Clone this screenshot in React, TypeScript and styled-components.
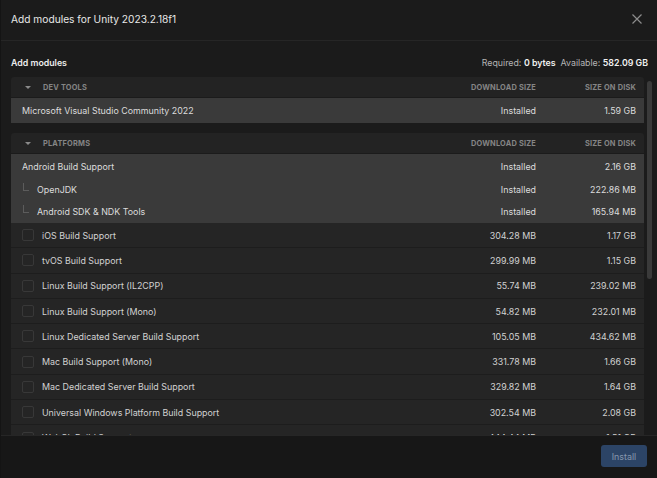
import React from "react";
import styled, { createGlobalStyle } from "styled-components";

const GlobalStyle = createGlobalStyle`
  html, body { margin: 0; padding: 0; background: #1b1b1b; }
  body { font-family: Inter, "Noto Sans", sans-serif; -webkit-font-smoothing: antialiased; }
  * { box-sizing: border-box; }
`;

const Dialog = styled.div`
  width: 657px;
  height: 478px;
  display: flex;
  flex-direction: column;
  background: #1b1b1b;
  color: #dedede;
  overflow: hidden;
  border-left: 1px solid #141414;
`;

const Header = styled.div`
  height: 41px;
  flex: none;
  display: flex;
  align-items: center;
  justify-content: space-between;
  padding: 0 14px 2px 10px;
  border-bottom: 1px solid #262626;
`;

const Title = styled.div`
  font-size: 10.2px;
  color: #e8e8e8;
`;

const CloseButton = styled.button`
  background: none;
  border: none;
  padding: 0;
  width: 12px;
  height: 12px;
  display: flex;
  color: #8c8c8c;
`;

const Body = styled.div`
  flex: 1;
  min-height: 0;
  display: flex;
  flex-direction: column;
`;

const SubHeader = styled.div`
  display: flex;
  align-items: center;
  justify-content: space-between;
  height: 14px;
  margin: 14px 9px 8px 10px;
  font-size: 8.8px;
`;

const SubTitle = styled.div`
  font-weight: 600;
  color: #ececec;
`;

const Space = styled.div`
  color: #b4b4b4;
  b { color: #f0f0f0; font-weight: 600; }
`;

const ScrollArea = styled.div`
  flex: 1;
  min-height: 0;
  display: flex;
  padding-left: 10px;
`;

const List = styled.div`
  width: 633px;
  display: flex;
  flex-direction: column;
  gap: 10px;
  overflow: hidden;
`;

const Scrollbar = styled.div`
  margin: 4px 0 0 3px;
  width: 5px;
  height: 198px;
  border-radius: 3px;
  background: #3a3a3a;
`;

const Section = styled.div`
  display: flex;
  flex-direction: column;
  border-radius: 3px 3px 0 0;
  overflow: hidden;
  flex: none;
`;

const SectionHeader = styled.div`
  height: 21px;
  display: grid;
  grid-template-columns: 1fr 100px 100px;
  align-items: center;
  padding-right: 8px;
  background: #232323;
  border-bottom: 1px solid #1b1b1b;
  font-size: 7.4px;
  font-weight: 700;
  letter-spacing: 0.2px;
  color: #858585;
  text-transform: uppercase;
`;

const SectionTitle = styled.div`
  display: flex;
  align-items: center;
  gap: 12px;
  padding-left: 14px;
`;

const Caret = styled.span`
  width: 0;
  height: 0;
  border-left: 3px solid transparent;
  border-right: 3px solid transparent;
  border-top: 3px solid #8a8a8a;
`;

const Right = styled.div`
  text-align: right;
`;

const Row = styled.div<{ $installed?: boolean; $h?: number }>`
  height: ${(p) => p.$h ?? 25.3}px;
  flex: none;
  display: grid;
  grid-template-columns: 1fr 100px 100px;
  align-items: center;
  padding-right: 8px;
  font-size: 8.9px;
  color: ${(p) => (p.$installed ? "#dcdcdc" : "#d2d2d2")};
  background: ${(p) => (p.$installed ? "#3a3a3a" : "#252525")};
  border-bottom: 1px solid ${(p) => (p.$installed ? "#3a3a3a" : "#1d1d1d")};
`;

const Name = styled.div<{ $indent?: number }>`
  display: flex;
  align-items: center;
  padding-left: ${(p) => p.$indent ?? 11}px;
  gap: 8px;
`;

const Checkbox = styled.span`
  width: 12px;
  height: 12px;
  border: 1px solid #383838;
  border-radius: 2px;
  flex: none;
`;

const TreeLine = styled.span`
  width: 6px;
  height: 8px;
  margin-top: -6px;
  border-left: 1px solid #5c5c5c;
  border-bottom: 1px solid #5c5c5c;
  flex: none;
`;

const Footer = styled.div`
  height: 43px;
  flex: none;
  display: flex;
  align-items: center;
  justify-content: flex-end;
  padding: 0 10px 2px 0;
  border-top: 1px solid #262626;
  background: #171717;
`;

const InstallButton = styled.button`
  width: 46px;
  height: 22px;
  border: none;
  border-radius: 3px;
  background: #2c4466;
  color: #8797ad;
  font-family: inherit;
  font-size: 8.9px;
  padding: 0;
`;

type Mod = { name: string; dl: string; disk: string };

const platforms: Mod[] = [
  { name: "iOS Build Support", dl: "304.28 MB", disk: "1.17 GB" },
  { name: "tvOS Build Support", dl: "299.99 MB", disk: "1.15 GB" },
  { name: "Linux Build Support (IL2CPP)", dl: "55.74 MB", disk: "239.02 MB" },
  { name: "Linux Build Support (Mono)", dl: "54.82 MB", disk: "232.01 MB" },
  { name: "Linux Dedicated Server Build Support", dl: "105.05 MB", disk: "434.62 MB" },
  { name: "Mac Build Support (Mono)", dl: "331.78 MB", disk: "1.66 GB" },
  { name: "Mac Dedicated Server Build Support", dl: "329.82 MB", disk: "1.64 GB" },
  { name: "Universal Windows Platform Build Support", dl: "302.54 MB", disk: "2.08 GB" },
  { name: "WebGL Build Support", dl: "444.44 MB", disk: "1.51 GB" },
];

export default function App() {
  return (
    <>
      <GlobalStyle />
      <Dialog>
        <Header>
          <Title>Add modules for Unity 2023.2.18f1</Title>
          <CloseButton aria-label="Close">
            <svg width="12" height="12" viewBox="0 0 12 12">
              <path d="M1.5 1.5 L10.5 10.5 M10.5 1.5 L1.5 10.5" stroke="currentColor" strokeWidth="1.2" />
            </svg>
          </CloseButton>
        </Header>
        <Body>
          <SubHeader>
            <SubTitle>Add modules</SubTitle>
            <Space>
              Required: <b>0 bytes</b>&nbsp; Available: <b>582.09 GB</b>
            </Space>
          </SubHeader>
          <ScrollArea>
            <List>
              <Section>
                <SectionHeader>
                  <SectionTitle>
                    <Caret />
                    Dev tools
                  </SectionTitle>
                  <Right>Download size</Right>
                  <Right>Size on disk</Right>
                </SectionHeader>
                <Row $installed $h={25}>
                  <Name>Microsoft Visual Studio Community 2022</Name>
                  <Right>Installed</Right>
                  <Right>1.59 GB</Right>
                </Row>
              </Section>
              <Section>
                <SectionHeader>
                  <SectionTitle>
                    <Caret />
                    Platforms
                  </SectionTitle>
                  <Right>Download size</Right>
                  <Right>Size on disk</Right>
                </SectionHeader>
                <Row $installed $h={25}>
                  <Name>Android Build Support</Name>
                  <Right>Installed</Right>
                  <Right>2.16 GB</Right>
                </Row>
                <Row $installed $h={22}>
                  <Name $indent={12}>
                    <TreeLine />
                    OpenJDK
                  </Name>
                  <Right>Installed</Right>
                  <Right>222.86 MB</Right>
                </Row>
                <Row $installed $h={22}>
                  <Name $indent={12}>
                    <TreeLine />
                    Android SDK &amp; NDK Tools
                  </Name>
                  <Right>Installed</Right>
                  <Right>165.94 MB</Right>
                </Row>
                {platforms.map((m) => (
                  <Row key={m.name}>
                    <Name>
                      <Checkbox />
                      {m.name}
                    </Name>
                    <Right>{m.dl}</Right>
                    <Right>{m.disk}</Right>
                  </Row>
                ))}
              </Section>
            </List>
            <Scrollbar />
          </ScrollArea>
        </Body>
        <Footer>
          <InstallButton>Install</InstallButton>
        </Footer>
      </Dialog>
    </>
  );
}
